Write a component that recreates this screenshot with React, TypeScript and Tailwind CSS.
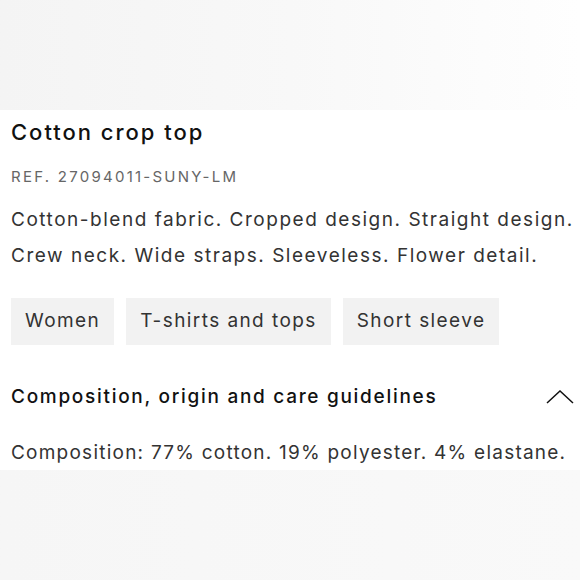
const tags = ['Women', 'T-shirts and tops', 'Short sleeve'];

export default function App() {
  return (
    <div className="flex h-[580px] w-[580px] flex-col overflow-hidden bg-white font-['Inter',sans-serif]">
      <div className="h-[110px] shrink-0 bg-gradient-to-r from-[#f4f4f4] via-[#f8f8f8] to-[#fefefe]" />

      <div className="px-[11px]">
        <h1 className="mt-[8px] text-[22px] font-medium leading-[28px] tracking-[0.09em] text-[#111]">
          Cotton crop top
        </h1>
        <p className="mt-[21px] text-[15px] leading-[20px] tracking-[0.15em] text-[#666]">
          REF. 27094011-SUNY-LM
        </p>
        <p className="mt-[15px] whitespace-nowrap text-[19px] leading-[36px] tracking-[0.08em] text-[#333]">
          Cotton-blend fabric. Cropped design. Straight design.
          <br />
          Crew neck. Wide straps. Sleeveless. Flower detail.
        </p>

        <div className="mt-[24px] flex gap-[12px]">
          {tags.map(tag => (
            <span
              key={tag}
              className="flex h-[47px] items-center bg-[#f2f2f2] px-[14px] text-[19px] tracking-[0.075em] text-[#333]"
            >
              {tag}
            </span>
          ))}
        </div>

        <div className="mt-[40px] flex items-center justify-between">
          <h2 className="text-[19px] font-medium leading-[24px] tracking-[0.09em] text-[#111]">
            Composition, origin and care guidelines
          </h2>
          <svg width="28" height="14" viewBox="0 0 28 14" className="mr-[-5px]" fill="none" stroke="#111" strokeWidth="1.5">
            <path d="M1 13 L14 1 L27 13" />
          </svg>
        </div>

        <p className="mt-[30px] whitespace-nowrap text-[19px] leading-[28px] tracking-[0.065em] text-[#333]">
          Composition: 77% cotton. 19% polyester. 4% elastane.
        </p>
      </div>

      <div className="mt-auto h-[110px] shrink-0 bg-gradient-to-r from-[#f6f6f6] to-[#f9f9f9]" />
    </div>
  );
}
